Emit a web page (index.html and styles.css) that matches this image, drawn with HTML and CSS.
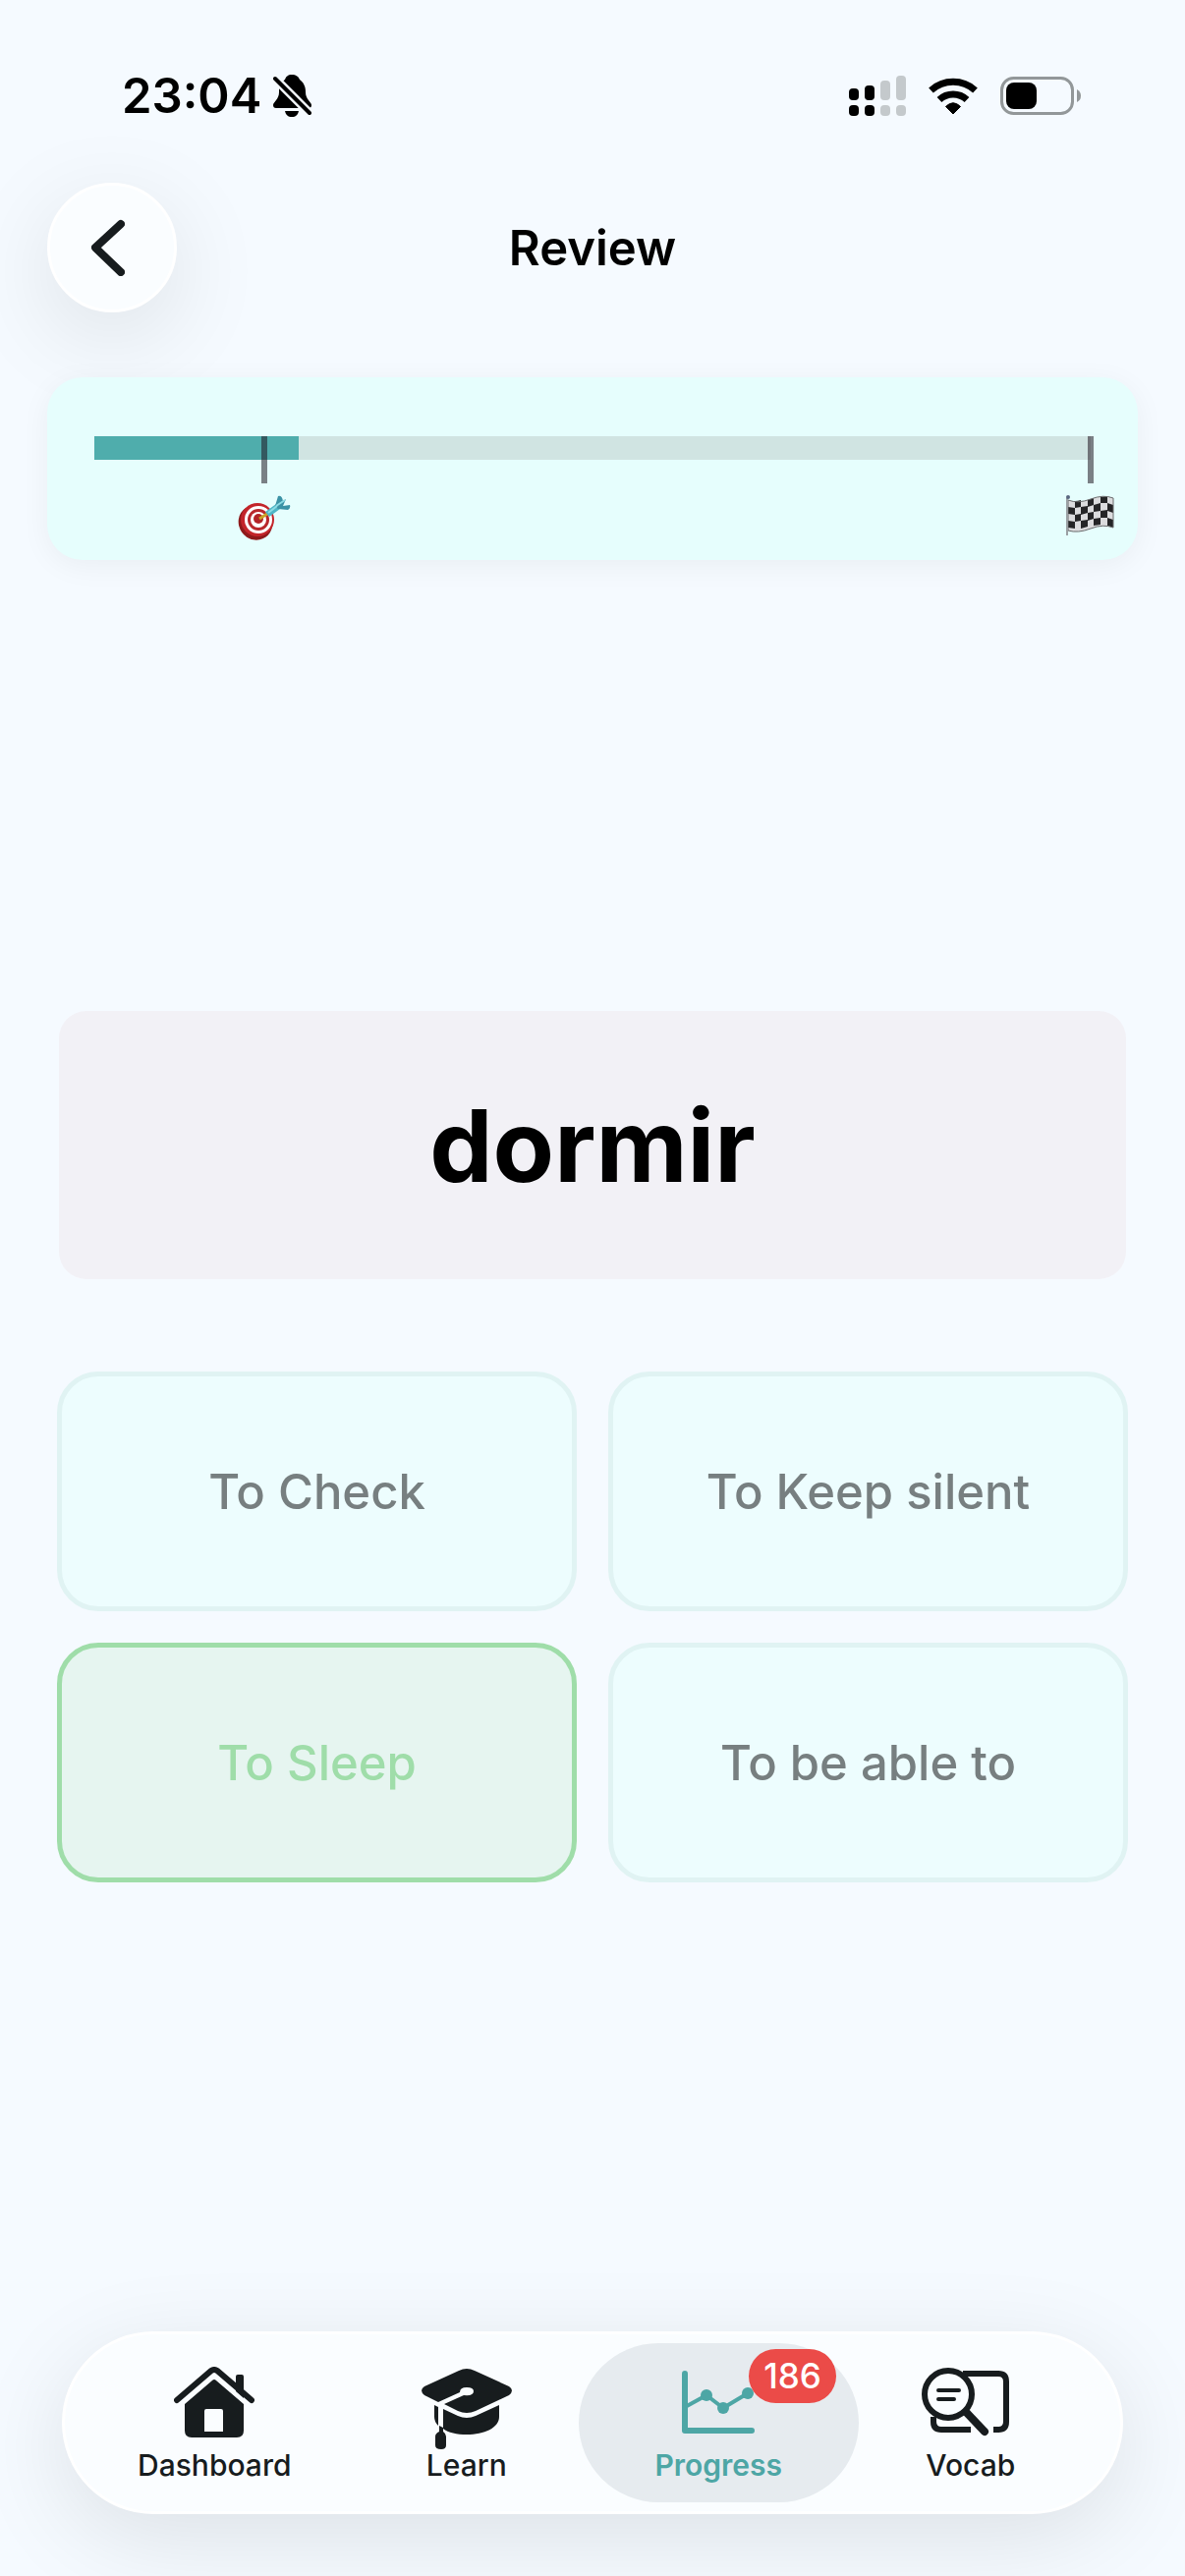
FILE: index.html
```html
<!DOCTYPE html>
<html lang="en">
<head>
    <meta charset="UTF-8">
    <meta name="viewport" content="width=device-width, initial-scale=1">
    <title>Review</title>
    <link rel="stylesheet" href="styles.css">
</head>
<body>
    <div class="status-bar">
        <div class="status-left">
            <span class="time">23:04</span>
            <svg width="39" height="43" viewBox="0 0 39 43" aria-hidden="true">
                <path d="M19 0C23 0 26 2 27 5C31 8 33 12 33 18C33 25 39 28 39 31C39 33 38 34 36 34H3C1 34 0 33 0 31C0 28 6 25 6 18C6 12 7 8 12 5C13 2 15 0 19 0Z"/>
                <path d="M12 37H26C25 41 23 43 19 43C15 43 13 41 12 37Z"/>
                <path class="slash-gap" d="M1 3L38 40"/>
                <path class="slash" d="M2 4L37 39"/>
            </svg>
        </div>
        <div class="status-right">
            <svg width="58" height="41" viewBox="0 0 58 41" aria-hidden="true">
                <rect x="0" y="13" width="10" height="12" rx="4"/>
                <rect x="16" y="10" width="10" height="15" rx="4"/>
                <rect x="0" y="30" width="10" height="11" rx="4"/>
                <rect x="16" y="30" width="10" height="11" rx="4"/>
                <g fill="#c4c9cc">
                    <rect x="32" y="5" width="10" height="20" rx="4"/>
                    <rect x="48" y="0" width="10" height="25" rx="4"/>
                    <rect x="32" y="30" width="10" height="11" rx="4"/>
                    <rect x="48" y="30" width="10" height="11" rx="4"/>
                </g>
            </svg>
            <svg width="50" height="37" viewBox="0 0 50 37" aria-hidden="true">
                <g fill="none" stroke="#000" stroke-width="7">
                    <path d="M2.500 13A33.500 33.500 0 0 1 47.500 13"/>
                    <path d="M11 22.500A20.500 20.500 0 0 1 39 22.500"/>
                </g>
                <path d="M25 37L17.500 29.500Q25 22 32.500 29.500Z" stroke="#000" stroke-linejoin="round"/>
            </svg>
            <svg width="82" height="39" viewBox="0 0 82 39" aria-hidden="true">
                <rect x="1.500" y="1.500" width="72" height="36" rx="12" fill="none" stroke="#929799" stroke-width="3"/>
                <rect x="6" y="6" width="31" height="27" rx="8"/>
                <path d="M78 13Q82 15 82 19.500Q82 24 78 26Z" fill="#929799"/>
            </svg>
        </div>
    </div>

    <header class="header">
        <a class="back" href="#" aria-label="Back">
            <svg width="34" height="58" viewBox="0 0 34 58" aria-hidden="true">
                <path d="M30 5L4 29L30 54" fill="none" stroke="#171c1e" stroke-width="8" stroke-linecap="round" stroke-linejoin="round"/>
            </svg>
        </a>
        <h1>Review</h1>
    </header>

    <section class="progress-card">
        <div class="track" role="progressbar" aria-label="Review progress">
            <div class="fill" style="width: 20.5%"></div>
            <div class="marker" style="left: 17.1%">
                <span class="tick"></span>
                <svg width="54" height="46" viewBox="0 0 54 46" aria-hidden="true">
                    <ellipse cx="18" cy="28" rx="17" ry="18" fill="#8e1a1b" transform="rotate(-35 18 28)"/>
                    <ellipse cx="20" cy="25" rx="17" ry="17" fill="#c3252a"/>
                    <ellipse cx="21" cy="25" rx="14" ry="14" fill="#fff"/>
                    <ellipse cx="21" cy="25" rx="11" ry="11" fill="#b9272b"/>
                    <ellipse cx="21" cy="25" rx="8" ry="8" fill="#fff"/>
                    <ellipse cx="21" cy="24" rx="5" ry="5" fill="#b32327"/>
                    <path d="M22 24L30 19" stroke="#c9a227" stroke-width="3"/>
                    <path d="M28 17L32 22L43 14L39 9Z" fill="#4eb6c6"/>
                    <path d="M38 11L41 1Q45 0 46 6L49 4L46 11L53 10Q54 13 51 15L41 14Z" fill="#3b93a6"/>
                    <path d="M39 11L48 5M31 18L40 11" stroke="#8bdbe4" stroke-width="2"/>
                </svg>
            </div>
            <div class="marker" style="left: 100%">
                <span class="tick"></span>
                <svg width="50" height="46" viewBox="0 0 50 46" aria-hidden="true">
                    <path d="M2 5Q12 9 25 4T48 3V33Q38 29 25 34T2 36Z" fill="#dcdcde"/>
                    <g fill="#252527">
                        <path d="M9 6Q12 6 15 5V12L9 13ZM22 5L28 3V10L22 12ZM35 2L42 1V8H35Z"/>
                        <path d="M2 12L9 13V20L2 19ZM15 12L22 11V18L15 20ZM28 10L35 8V16L28 17ZM42 8L48 10V18L42 16Z"/>
                        <path d="M9 20L15 19V26L9 27ZM22 18L28 17V24L22 26ZM35 16L42 15V23H35Z"/>
                        <path d="M2 26L9 27V34L2 33ZM15 26L22 25V32L15 34ZM28 24L35 23V30L28 31ZM42 23L48 25V33L42 31Z"/>
                    </g>
                    <path d="M2 5Q12 9 25 4T48 3V33Q38 29 25 34T2 36Z" fill="none" stroke="#6a6a6c"/>
                    <path d="M1 3V41" stroke="#9ba0a3" stroke-width="2"/>
                    <circle cx="2" cy="2" r="2" fill="#59667f"/>
                </svg>
            </div>
        </div>
    </section>

    <main class="quiz">
        <h2 class="word">dormir</h2>
        <div class="answers">
            <button class="answer" type="button">To Check</button>
            <button class="answer" type="button">To Keep silent</button>
            <button class="answer correct" type="button">To Sleep</button>
            <button class="answer" type="button">To be able to</button>
        </div>
    </main>

    <nav class="tab-bar">
        <a class="tab" href="#">
            <span class="tab-icon">
                <svg width="82" height="84" viewBox="0 0 82 84" aria-hidden="true">
                    <path d="M63 25V10Q63 8 65 8H69Q71 8 71 10V32Z"/>
                    <path d="M3 34L38 4Q41 2 44 4L79 34" fill="none" stroke="#171c1e" stroke-width="6" stroke-linecap="round"/>
                    <path fill-rule="evenodd" d="M39 14Q41 12 43 14L71 38V65Q71 72 64 72H18Q11 72 11 65V38ZM33 43Q31 43 31 45V66H50V45Q50 43 48 43Z"/>
                </svg>
            </span>
            Dashboard
        </a>
        <a class="tab" href="#">
            <span class="tab-icon">
                <svg width="92" height="84" viewBox="0 0 92 84" aria-hidden="true">
                    <g transform="translate(0 2)">
                        <path d="M38 2Q46 -2 54 2L89 18Q95 22 89 27L55 43Q46 47 37 43L23 36L43 27Q53 28 53 23Q53 19 46 19Q39 19 39 24L17 34L3 27Q-3 22 3 18Z"/>
                        <path d="M13 37L17 39V58Q13 54 13 49ZM22 41L37 48Q46 52 55 48L79 37V49C79 60 64 67 46 67C36 67 27 65 22 61Z"/>
                        <path d="M18 58L22 60V64Q25 66 25 69V78Q25 82 20 82Q14 82 14 78V69Q14 66 18 64Z"/>
                    </g>
                </svg>
            </span>
            Learn
        </a>
        <a class="tab active" href="#">
            <span class="tab-icon">
                <svg width="74" height="84" viewBox="0 0 74 84" aria-hidden="true">
                    <g transform="translate(0 4)" fill="none" stroke="#4da6a5" stroke-linecap="round" stroke-linejoin="round">
                        <path d="M3 3V61H71" stroke-width="6"/>
                        <path d="M5 36L25 25L42 38L67 23" stroke-width="4"/>
                        <g fill="#4da6a5" stroke="none">
                            <circle cx="25" cy="25" r="6"/>
                            <circle cx="42" cy="38" r="6"/>
                            <circle cx="67" cy="23" r="6"/>
                        </g>
                    </g>
                </svg>
                <span class="badge">186</span>
            </span>
            Progress
        </a>
        <a class="tab" href="#">
            <span class="tab-icon">
                <svg width="100" height="84" viewBox="0 0 100 84" aria-hidden="true">
                    <g transform="translate(0 1)" fill="none" stroke="#171c1e" stroke-linecap="round">
                        <path d="M42 6H78Q86 6 86 14V55Q86 63 78 63H73M12 50V55Q12 63 20 63H50" stroke-width="6" stroke-linecap="butt"/>
                        <circle cx="27" cy="27" r="24" fill="#fafdff" stroke-width="6"/>
                        <path d="M17 23H38M17 32H33" stroke-width="4"/>
                        <path d="M46 46L64 65" stroke-width="8"/>
                    </g>
                </svg>
            </span>
            Vocab
        </a>
    </nav>
</body>
</html>
```

FILE: styles.css
```css
* {
    box-sizing: border-box;
}

body {
    display: flex;
    flex-direction: column;
    min-height: 100vh;
    margin: 0;
    font-family: Inter, "Liberation Sans", sans-serif;
    background-color: #f5faff;
    color: #000;
}

svg {
    display: block;
    flex: none;
}

h1,
h2 {
    margin: 0;
}

/* Status bar */
.status-bar {
    display: flex;
    justify-content: space-between;
    height: 186px;
    padding: 65px 106px 0 124px;
}

.status-left,
.status-right {
    display: flex;
    align-items: center;
    height: 64px;
}

.status-left {
    gap: 12px;
}

.status-right {
    gap: 23px;
}

.time {
    font-size: 49px;
    font-weight: 600;
}

.slash-gap {
    fill: none;
    stroke: #f5faff;
    stroke-width: 9;
}

.slash {
    fill: none;
    stroke: #000;
    stroke-width: 4;
    stroke-linecap: round;
}

/* Header */
.header {
    display: grid;
    grid-template-columns: 132px 1fr 132px;
    align-items: center;
    padding: 0 48px;
}

.header h1 {
    font-size: 49px;
    font-weight: 600;
    text-align: center;
}

.back {
    display: flex;
    align-items: center;
    justify-content: center;
    width: 132px;
    height: 132px;
    padding-right: 8px;
    background-color: #fafdff;
    border: 3px solid #fff;
    border-radius: 50%;
    box-shadow: 0 24px 96px rgba(0, 0, 0, 0.1);
}

/* Progress */
.progress-card {
    margin: 66px 48px 0;
    padding: 60px 48px 102px;
    background-color: #e6fefd;
    border-radius: 36px;
    box-shadow: 0 6px 30px rgba(0, 0, 0, 0.05);
}

.track {
    position: relative;
    height: 24px;
    background-color: #d0e4e2;
}

.fill {
    height: 100%;
    background-color: #4fadac;
}

.marker {
    position: absolute;
    top: 0;
    display: flex;
    flex-direction: column;
    align-items: center;
    gap: 12px;
    transform: translateX(-50%);
}

.tick {
    width: 6px;
    height: 48px;
    background-color: rgba(27, 16, 27, 0.53);
}

/* Quiz */
.quiz {
    display: flex;
    flex: 1;
    flex-direction: column;
    justify-content: center;
    gap: 94px;
    padding: 2px 58px 0;
}

.word {
    margin: 0 2px;
    padding: 75px 24px 73px;
    font-size: 102px;
    font-weight: 700;
    line-height: 125px;
    text-align: center;
    background-color: #f2f1f6;
    border-radius: 28px;
}

.answers {
    display: grid;
    grid-template-columns: 1fr 1fr;
    gap: 32px;
}

.answer {
    min-height: 244px;
    padding: 24px;
    font-family: inherit;
    font-size: 49px;
    font-weight: 500;
    color: #777f80;
    background-color: #edfdfe;
    border: 5px solid #e0f3f3;
    border-radius: 42px;
    cursor: pointer;
}

.answer.correct {
    color: #9fdda9;
    background-color: #e6f5f0;
    border-color: #9fdda9;
}

/* Tab bar */
.tab-bar {
    display: grid;
    grid-template-columns: repeat(4, 1fr);
    margin: 0 63px 63px;
    padding: 9px 24px;
    background-color: #fafdff;
    border: 3px solid #fff;
    border-radius: 93px;
    box-shadow: 0 24px 96px rgba(0, 0, 0, 0.1);
}

.tab {
    display: flex;
    flex-direction: column;
    align-items: center;
    height: 162px;
    margin: 0 -14px;
    padding-top: 24px;
    font-size: 30px;
    font-weight: 500;
    line-height: 36px;
    color: #171c1e;
    text-decoration: none;
    border-radius: 81px;
}

.tab-icon {
    position: relative;
    height: 82px;
}

.tab-icon svg {
    fill: #171c1e;
}

.tab.active {
    font-weight: 600;
    color: #4da6a5;
    background-color: #e6ebef;
}

.badge {
    position: absolute;
    top: -18px;
    left: 68px;
    padding: 0 15px;
    font-size: 35px;
    font-weight: 500;
    line-height: 55px;
    color: #fff;
    background-color: #eb4b48;
    border-radius: 28px;
}
```
